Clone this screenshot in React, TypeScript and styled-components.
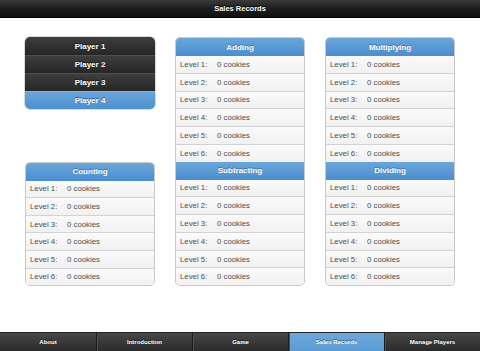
import styled, { createGlobalStyle } from 'styled-components'

const GlobalStyle = createGlobalStyle`
    html, body {
        margin: 0;
        padding: 0;
        background: #ffffff;
        font-family: 'Liberation Sans', Arial, sans-serif;
    }
`

const Screen = styled.div`
    width: 480px;
    height: 351px;
    display: flex;
    flex-direction: column;
    background: #ffffff;
    overflow: hidden;
`

const TitleBar = styled.div`
    height: 18px;
    flex: none;
    display: flex;
    align-items: center;
    justify-content: center;
    background: linear-gradient(#3a3a3a, #1e1e1e 50%, #111111);
    border-bottom: 1px solid #000;
    box-sizing: border-box;
    color: #fff;
    font-size: 7.5px;
    font-weight: bold;
    text-shadow: 0 -1px 0 #000;
`

const Content = styled.div`
    flex: 1;
    display: grid;
    grid-template-columns: repeat(3, 130px);
    grid-template-rows: 124.6px 124.6px;
    column-gap: 20px;
    padding: 19px 25px 0;
    align-content: start;
`

const PlayerList = styled.div`
    align-self: start;
    border-radius: 5px;
    overflow: hidden;
    box-shadow: 0 0 0 1px rgba(0, 0, 0, 0.15);
`

const PlayerButton = styled.div<{ $active?: boolean }>`
    height: 18px;
    display: flex;
    align-items: center;
    justify-content: center;
    box-sizing: border-box;
    color: #fff;
    font-size: 8px;
    font-weight: bold;
    text-shadow: 0 -1px 0 rgba(0, 0, 0, 0.5);
    background: ${({ $active }) =>
        $active
            ? 'linear-gradient(#6aa6da, #4d8fcf)'
            : 'linear-gradient(#3e3e3e, #262626)'};
    border-top: 1px solid ${({ $active }) => ($active ? '#7fb4e2' : '#505050')};
    &:first-child {
        border-top: none;
    }
`

const Panel = styled.div<{ $top?: boolean; $bottom?: boolean }>`
    display: flex;
    flex-direction: column;
    border: 1px solid #c9c9c9;
    border-top: ${({ $top }) => ($top ? '1px solid #c9c9c9' : 'none')};
    border-bottom: ${({ $bottom }) => ($bottom ? '1px solid #c9c9c9' : 'none')};
    border-radius: ${({ $top, $bottom }) =>
        `${$top ? 5 : 0}px ${$top ? 5 : 0}px ${$bottom ? 5 : 0}px ${$bottom ? 5 : 0}px`};
    overflow: hidden;
    box-sizing: border-box;
    height: 124.6px;
`

const PanelHeader = styled.div`
    height: 18px;
    flex: none;
    display: flex;
    align-items: center;
    justify-content: center;
    background: linear-gradient(#6aa6da, #4b8dce);
    color: #fff;
    font-size: 8px;
    font-weight: bold;
    text-shadow: 0 -1px 0 rgba(0, 0, 0, 0.3);
`

const LevelRow = styled.div`
    flex: 1;
    display: flex;
    align-items: center;
    padding-left: 4px;
    background: linear-gradient(#fafafa, #f1f1f1);
    border-top: 1px solid #d2d2d2;
    color: #4d4d4d;
    font-size: 7.8px;
    &:nth-child(2) {
        border-top: none;
    }
`

const LevelLabel = styled.span`
    width: 37px;
`

const TabBar = styled.div`
    height: 19px;
    flex: none;
    display: grid;
    grid-template-columns: repeat(5, 96px);
    background: linear-gradient(#474747, #2a2a2a);
    border-top: 1px solid #222;
    box-sizing: border-box;
`

const Tab = styled.div<{ $active?: boolean }>`
    display: flex;
    align-items: center;
    justify-content: center;
    color: #fff;
    font-size: 6px;
    font-weight: bold;
    text-shadow: 0 -1px 0 rgba(0, 0, 0, 0.5);
    border-left: 1px solid #1e1e1e;
    box-shadow: inset 1px 0 0 #4e4e4e;
    background: ${({ $active }) =>
        $active ? 'linear-gradient(#6ea9dc, #5a9ad3)' : 'transparent'};
    &:first-child {
        border-left: none;
        box-shadow: none;
    }
`

const players = ['Player 1', 'Player 2', 'Player 3', 'Player 4']
const levels = [1, 2, 3, 4, 5, 6]
const tabs = ['About', 'Introduction', 'Game', 'Sales Records', 'Manage Players']

function RecordPanel({
    title,
    top = true,
    bottom = true,
}: {
    title: string
    top?: boolean
    bottom?: boolean
}) {
    return (
        <Panel $top={top} $bottom={bottom}>
            <PanelHeader>{title}</PanelHeader>
            {levels.map((level) => (
                <LevelRow key={level}>
                    <LevelLabel>Level {level}:</LevelLabel>
                    <span>0 cookies</span>
                </LevelRow>
            ))}
        </Panel>
    )
}

export default function App() {
    return (
        <Screen>
            <GlobalStyle />
            <TitleBar>Sales Records</TitleBar>
            <Content>
                <PlayerList>
                    {players.map((name, i) => (
                        <PlayerButton key={name} $active={i === 3}>
                            {name}
                        </PlayerButton>
                    ))}
                </PlayerList>
                <RecordPanel title="Adding" bottom={false} />
                <RecordPanel title="Multiplying" bottom={false} />
                <RecordPanel title="Counting" />
                <RecordPanel title="Subtracting" top={false} />
                <RecordPanel title="Dividing" top={false} />
            </Content>
            <TabBar>
                {tabs.map((tab) => (
                    <Tab key={tab} $active={tab === 'Sales Records'}>
                        {tab}
                    </Tab>
                ))}
            </TabBar>
        </Screen>
    )
}
